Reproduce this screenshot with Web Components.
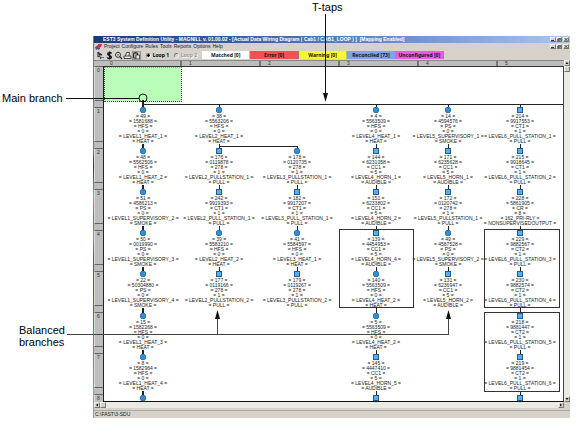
<!DOCTYPE html>
<html lang="en">
<head>
<meta charset="utf-8">
<title>Wiring diagram</title>
<style>
body { margin: 0; background: #fff; color: #000; font-family: "Liberation Sans", Arial, sans-serif; }
</style>
</head>
<body>
<wiring-figure>
  <app-window></app-window>
</wiring-figure>

<script>
const define = (name, html, setup) => customElements.define(name, class extends HTMLElement {
  connectedCallback() {
    if (this.shadowRoot) return;
    const root = this.attachShadow({ mode: "open" });
    root.innerHTML = html;
    if (setup) setup(this, root);
  }
});

/* One device: symbol with six lines of data under it */
define("device-node", `<style>
  :host { position: absolute; width: 100px; text-align: center; font-size: 5px; color: #222; }
  i { display: block; width: 6px; height: 6px; margin: 0 auto 1px; box-sizing: border-box; background: #55b0f0; border: 1px solid #235a92; }
  :host([kind="round"]) i { border-radius: 2px; background: #348fd2; border-color: #2b78b4; }
  div { line-height: 5px; white-space: pre; }
</style><i></i><section></section>`, (el, root) => {
  const data = el.getAttribute("data");
  if (!data) return;
  data.split(",").forEach(t => {
    const d = document.createElement("div");
    d.textContent = "= " + t + " =";
    root.querySelector("section").append(d);
  });
});

define("wiring-canvas", `<style>
  :host { display: block; position: relative; height: 336px; overflow: hidden; background: #fff;
    border-top: 1px solid #333; border-bottom: 1px solid #111; border-left: 1px solid #222; border-right: 1px solid #444; box-sizing: border-box; }
  .sel { position: absolute; left: 0; top: 0; width: 78px; height: 35px; box-sizing: border-box; background: #b9fdb9; border: 1px dotted #444; border-top-color: #8b8; }
  svg { position: absolute; left: 0; top: 0; width: 100%; height: 100%; }
</style><div class="sel"></div><svg shape-rendering="crispEdges" stroke="#222" fill="none"></svg>`, (el, root) => {
  const rows = [43, 84, 125, 166, 207, 249, 290, 331];
  const columns = [
    [39, [
      "r49,1581688,HFS,0,LEVEL1_HEAT_1,HEAT", "r48,5562506,HFS,0,LEVEL1_HEAT_2,HEAT",
      "r51,4586213,PS,0,LEVEL1_SUPERVISORY_2,SMOKE", "r50,0019990,PS,0,LEVEL1_SUPERVISORY_3,SMOKE",
      "r22,50304880,PS,0,LEVEL1_SUPERVISORY_4,SMOKE", "r15,1582268,HFS,0,LEVEL1_HEAT_3,HEAT",
      "r8,1582964,HFS,0,LEVEL1_HEAT_4,HEAT", "r"]],
    [115, [
      "r38,5563206,HFS,0,LEVEL2_HEAT_1,HEAT", "s176,0119878,278,1,LEVEL2_PULLSTATION_1,PULL",
      "s242,9919393,CT1,1,LEVEL2_PULL_STATION_1,PULL", "r39,5583210,HFS,0,LEVEL2_HEAT_2,HEAT",
      "s177,0119166,278,1,LEVEL2_PULLSTATION_2,PULL"]],
    [193, [
      null, "r178,0120735,278,1,LEVEL3_PULLSTATION_1,PULL",
      "s182,9917207,CT1,1,LEVEL3_PULL_STATION_1,PULL", "r41,5584597,HFS,0,LEVEL3_HEAT_1,HEAT",
      "s179,0119267,278,1,LEVEL3_PULLSTATION_2,PULL"]],
    [272, [
      "r4,5563509,HFS,0,LEVEL4_HEAT_1,HEAT", "s144,6231058,CC1,5,LEVEL4_HORN_1,AUDIBLE",
      "s151,6233802,CC1,5,LEVEL4_HORN_2,AUDIBLE", "s139,4454953,CC1,5,LEVEL4_HORN_4,AUDIBLE",
      "r140,5563509,HFS,0,LEVEL4_HEAT_2,HEAT", "r5,5563509,HFS,0,LEVEL4_HEAT_2,HEAT",
      "s145,4447410,CC1,5,LEVEL4_HORN_5,AUDIBLE", "s"]],
    [344, [
      "r14,4594576,PS,0,LEVEL5_SUPERVISORY_1,SMOKE", "s171,6235628,CC1,5,LEVEL5_HORN_1,AUDIBLE",
      "s172,0120742,278,1,LEVEL5_PULLSTATION_1,PULL", "r49,4587528,PS,0,LEVEL5_SUPERVISORY_2,SMOKE",
      "s131,6236947,CC1,5,LEVEL5_HORN_2,AUDIBLE"]],
    [416, [
      "s214,9917553,CT1,1,LEVEL6_PULL_STATION_1,PULL", "s215,9918645,CT1,1,LEVEL6_PULL_STATION_2,PULL",
      "s228,5861905,CR,8,162_PRI-RLY,NONSUPERVISEDOUTPUT", "s229,9882567,CT2,1,LEVEL6_PULL_STATION_3,PULL",
      "s230,9882574,CT2,1,LEVEL6_PULL_STATION_4,PULL", "s218,9881447,CT2,1,LEVEL6_PULL_STATION_5,PULL",
      "s219,9881454,CT2,1,LEVEL6_PULL_STATION_6,PULL", "s"]]
  ];
  let svg = '<path d="M39 37.5H900" stroke-width="1"/><path d="M115 79.5H194"/>';
  const line = (x, y1, y2, w) => { svg += `<rect x="${x - (w > 1 ? 1 : 0)}" y="${y1}" width="${w}" height="${y2 - y1}" fill="#222" stroke="none"/>`; };
  columns.forEach(([x, list], c) => {
    const w = c === 0 ? 2 : 1;
    list.forEach((entry, r) => {
      if (!entry) return;
      const y = rows[r];
      if (r === 0) line(x, c === 0 ? 33 : 37, y - 3, w);
      else line(x, c === 2 && r === 1 ? 79 : rows[r - 1] + 34, y - 3, w);
      const node = document.createElement("device-node");
      node.setAttribute("kind", entry[0] === "r" ? "round" : "square");
      node.setAttribute("data", entry.slice(1));
      node.style.left = x - 50 + "px";
      node.style.top = y - 3 + "px";
      root.append(node);
    });
  });
  svg += '<path d="M235.5 162.5h74v78h-74zM380.5 162.5h75v78h-75zM380.5 245.5h75v79h-75z" stroke="#333"/>';
  root.querySelector("svg").innerHTML = svg;
});

define("ruler-top", `<style>
  :host { display: flex; height: 6px; overflow: hidden; background: #bdbdbd; border-top: 1px solid #888; box-sizing: border-box; font-size: 5px; line-height: 5px; color: #333; }
  span { flex: 0 0 79px; box-sizing: border-box; padding-left: 7px; border-right: 2px solid #777; }
</style>` + [0, 1, 2, 3, 4, 5].map(n => `<span>${n}</span>`).join(""));

define("ruler-side", `<style>
  :host { display: block; height: 336px; overflow: hidden; background: #bdbdbd; font-size: 5px; line-height: 5px; color: #333; }
  div { height: 35px; margin-bottom: 6px; padding: 1px 0 0 2px; box-sizing: border-box; border-top: 1px solid #666; border-bottom: 1px solid #666; border-left: 1px solid #ddd; }
</style>` + [0, 1, 2, 3, 4, 5, 6, 7, 8].map(n => `<div>${n}</div>`).join(""));

define("window-buttons", `<style>
  :host { display: flex; margin-left: auto; }
  button { all: unset; box-sizing: border-box; width: 6px; height: 5px; background: #d6d2ca; border: 1px solid #f4f2ee; border-right-color: #777; border-bottom-color: #777; display: flex; }
  button:last-child { margin-left: 1px; }
  svg { width: 4px; height: 3px; display: block; fill: none; stroke: #333; stroke-width: 1; }
</style>
<button aria-label="Minimize"><svg viewBox="0 0 4 3"><path d="M0 2.5h3"/></svg></button>
<button aria-label="Restore"><svg viewBox="0 0 4 3"><path d="M1 .5h2.5v2M.5 1.5h2v1h-2z" stroke-width=".7"/></svg></button>
<button aria-label="Close"><svg viewBox="0 0 4 3"><path d="M.5 0l3 3M3.500 0l-3 3" stroke-width=".8"/></svg></button>`);

define("app-logo", `<style>:host { display: block; width: 7px; height: 6px; } svg { display: block; }</style>
<svg width="7" height="6" viewBox="0 0 7 6"><path d="M1 1l3-1 3 1-1 4-3 1-3-1z" fill="#e8d8d8"/><path d="M3 0l4 0-1 3-3 1z" fill="#d32c30"/><path d="M0 3l3-2v4l-2 1z" fill="#3c5cae"/><path d="M3 4l2-1v2l-2 1z" fill="#b02838"/></svg>`);

define("status-tag", `<style>
  :host { height: 8px; box-sizing: border-box; text-align: center; font: bold 5px/8px "Noto Sans", sans-serif; white-space: nowrap; border-right: 1px solid #8888; color: #111; }
</style><slot></slot>`);

define("app-toolbar", `<style>
  :host { display: flex; align-items: center; height: 10px; padding-left: 2px; font: bold 5px/8px "Noto Sans", sans-serif; white-space: nowrap; }
  button { all: unset; flex: none; width: 9px; height: 9px; }
  button:last-of-type { background: #c2beb8; outline: 1px solid #9a968f; outline-offset: -1px; }
  svg { display: block; width: 9px; height: 9px; fill: none; stroke: #333; }
  label { display: flex; flex: none; align-items: center; gap: 2px; width: 23px; margin-left: 5px; }
  label.off { color: #999; text-shadow: 1px 1px #fff; }
  input { appearance: none; width: 5px; height: 5px; margin: 0; box-sizing: border-box; border: 1px solid #777; border-right-color: #eee; border-bottom-color: #eee; border-radius: 50%; background: #fff; }
  input:checked { background: radial-gradient(#000 1px, #fff 2px); }
  input:disabled { background: #d6d2ca; }
  .tags { display: flex; flex: 0 1 242px; margin-left: 5px; }
  .tags > * { flex: 1 1 0; min-width: 0; }
</style>
<button aria-label="Select"><svg viewBox="0 0 9 9"><path d="M2 1v5l1.500-1.200L5 8" stroke="#224"/><path d="M2 1l4 3H3.500z" fill="#124"/><path d="M5 6.500h3" stroke="#357fd0"/></svg></button>
<button aria-label="Costs"><svg viewBox="0 0 9 9"><path d="M6.500 2.500C5.500 1 2.500 1.300 2.800 3.200s3.800 1 3.600 3S3 8 2.200 6.500M4.500.5v8" stroke="#111" stroke-width="1.400"/></svg></button>
<button aria-label="Zoom"><svg viewBox="0 0 9 9"><circle cx="4" cy="3.800" r="2.500" fill="#e6f0f0"/><path d="M5.800 5.600L8 8" stroke-width="1.300"/><path d="M4 2.500v2.600M2.700 3.800h2.600" stroke="#277" stroke-width=".7"/></svg></button>
<button aria-label="Print"><svg viewBox="0 0 9 9"><path d="M1 5h7v2.500H1zM2.500 5L3.500 1.500h3L6 5" fill="#eee" stroke-width=".9"/></svg></button>
<button aria-label="Paste"><svg viewBox="0 0 9 9"><path d="M1.500 2h4v5h-4z" fill="#aaa"/><path d="M4 4h3.500v4H4z" fill="#eee" stroke-width=".8"/><path d="M2.500 1.500h2" stroke-width="1.500"/></svg></button>
<label><input type="radio" name="loop" checked>Loop 1</label>
<label class="off"><input type="radio" name="loop" disabled>Loop 2</label>
<div class="tags">
  <status-tag style="background:#fff">Matched [0]</status-tag>
  <status-tag style="background:#fa4f4f">Error [0]</status-tag>
  <status-tag style="background:#f8f832">Warning [0]</status-tag>
  <status-tag style="background:#7ba4ee">Reconciled [73]</status-tag>
  <status-tag style="background:#ee58ea">Unconfigured [0]</status-tag>
</div>`);

define("scroll-strip", `<style>
  :host { display: flex; background: #ebe9e4; justify-content: space-between; }
  :host([vertical]) { flex-direction: column; }
  .start { display: flex; flex-direction: inherit; }
  button, .thumb { all: unset; box-sizing: border-box; width: 6px; height: 6px; background: #d6d2ca; border: 1px solid #f4f2ee; border-right-color: #777; border-bottom-color: #777; display: flex; }
  svg { width: 4px; height: 4px; display: block; fill: #111; }
  :host([vertical]) svg { transform: rotate(90deg); }
</style><div class="start"><button aria-label="Back"><svg viewBox="0 0 4 4"><path d="M3 .5v3L1 2z"/></svg></button><div class="thumb"></div></div>
<button aria-label="Forward"><svg viewBox="0 0 4 4"><path d="M1 .5v3L3 2z"/></svg></button>`);

define("app-window", `<style>
  :host { display: block; background: #d6d2ca; border-left: 1px solid; border-image: linear-gradient(#777 30%, #123a6a 34%, #3cc 42%, #583 48%, #e73 52%, #714a90 58%, #557 66%, #2a9a9a 78%, #3b8 90%, #999 92%) 1; }
  .title { display: flex; align-items: center; gap: 1px; height: 7px; padding: 0 1px; color: #fff; background: linear-gradient(90deg, #18387a, #4a74b4 45%, #a6c8f0); font: bold 5px/7px "Liberation Sans", sans-serif; white-space: pre; overflow: hidden; }
  .menu { display: flex; align-items: center; height: 7px; padding: 0 1px; }
  .menu nav { display: flex; gap: 2px; margin-left: 2px; }
  .menu nav button { all: unset; font: 5px/7px "Liberation Sans", sans-serif; color: #222; }
  .area { display: grid; grid-template-columns: 9px minmax(0, 1fr) 6px; }
  .corner { background: #bdbdbd; border-top: 1px solid #888; }
  .vert { grid-row: 1 / 3; grid-column: 3; }
  .horiz { grid-column: 1 / 3; }
  .status { margin-top: 2px; height: 7px; padding-left: 1px; border-top: 1px solid #aaa; font: 5px/6px "Liberation Sans", sans-serif; color: #222; }
</style>
<div class="title"><app-logo></app-logo><span>EST3 System Definition Utility - MAGNILL v. 01.00.02 - [Actual Data Wiring Diagram ( Cab1 / CAB1_LOOP ) ]  [Mapping Enabled]</span><window-buttons></window-buttons></div>
<div class="menu"><app-logo></app-logo><nav><button>Project</button><button>Configure</button><button>Rules</button><button>Tools</button><button>Reports</button><button>Options</button><button>Help</button></nav><window-buttons></window-buttons></div>
<app-toolbar></app-toolbar>
<div class="area">
  <div class="corner"></div><ruler-top></ruler-top><scroll-strip class="vert" vertical></scroll-strip>
  <ruler-side></ruler-side><wiring-canvas></wiring-canvas>
  <scroll-strip class="horiz"></scroll-strip>
</div>
<div class="status">C:\\FAST\\3-SDU</div>`);

/* Page figure: the window with callouts drawn over it */
define("wiring-figure", `<style>
  :host { display: block; position: relative; padding: 36px 8px 7px 93px; font-size: 11px; line-height: 12px; }
  svg { position: absolute; left: 0; top: 0; width: 100%; height: 100%; pointer-events: none; }
  .call { position: absolute; white-space: nowrap; }
  .taps { left: 312px; top: 1px; }
  .main { left: 2px; top: 92px; }
  .bal { left: 19px; top: 324px; }
</style>
<slot></slot>
<svg fill="none" stroke="#111">
  <path d="M325.500 14V96M66 98.500H139"/>
  <circle cx="143" cy="98" r="4"/>
  <path d="M67 334.500H448M217.500 334V316M448.500 335V316" stroke="#444"/>
  <path d="M323 93h5l-2.500 9zM215 319h5l-2.500-9zM446 319h5l-2.500-9z" fill="#111" stroke="none"/>
</svg>
<div class="call taps">T-taps</div>
<div class="call main">Main branch</div>
<div class="call bal">Balanced<br>branches</div>`);
</script>
</body>
</html>
